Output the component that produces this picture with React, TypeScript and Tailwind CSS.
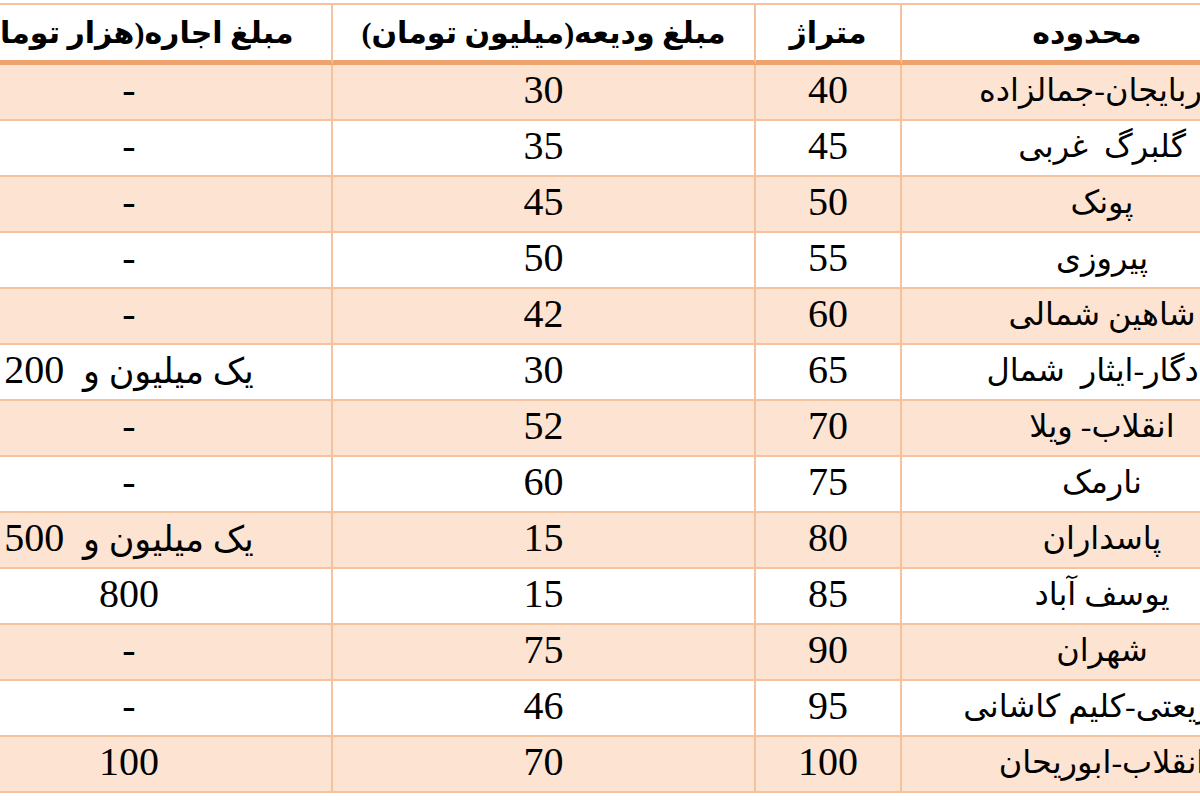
import React from 'react';

const rows = [
  { area: 'آذربایجان-جمالزاده', size: '40', deposit: '30', rent: '-' },
  { area: 'گلبرگ  غربی', size: '45', deposit: '35', rent: '-' },
  { area: 'پونک', size: '50', deposit: '45', rent: '-' },
  { area: 'پیروزی', size: '55', deposit: '50', rent: '-' },
  { area: 'شاهین شمالی', size: '60', deposit: '42', rent: '-' },
  { area: 'یادگار-ایثار  شمال', size: '65', deposit: '30', rent: '1200' },
  { area: 'انقلاب- ویلا', size: '70', deposit: '52', rent: '-' },
  { area: 'نارمک', size: '75', deposit: '60', rent: '-' },
  { area: 'پاسداران', size: '80', deposit: '15', rent: '1500' },
  { area: 'یوسف آباد', size: '85', deposit: '15', rent: '800' },
  { area: 'شهران', size: '90', deposit: '75', rent: '-' },
  { area: 'شریعتی-کلیم کاشانی', size: '95', deposit: '46', rent: '-' },
  { area: 'انقلاب-ابوریحان', size: '100', deposit: '70', rent: '100' },
];

const headers = ['محدوده', 'متراژ', 'مبلغ ودیعه(میلیون تومان)', 'مبلغ اجاره(هزار تومان)'];

const font = { fontFamily: '"Liberation Serif", "DejaVu Sans", serif' };

// rent values above a million are written out in words
function Rent({ value }: { value: string }) {
  if (value === '1200' || value === '1500') {
    return (
      <span>
        <span className="text-[35px]">یک میلیون و </span>
        <span> {value.slice(1)}</span>
      </span>
    );
  }
  return <span>{value}</span>;
}

export default function App() {
  return (
    <div className="w-[1200px] h-[800px] overflow-hidden bg-white" style={font}>
      <div className="pt-[3px] -ml-[73px] w-[1345px]">
        <div
          dir="rtl"
          className="grid grid-cols-[370px_146px_423px_406px] border-t-2 border-[#f4c29c] text-black text-[40px] leading-none"
        >
          {headers.map((h, i) => (
            <div
              key={h}
              className={`h-[60px] flex items-center justify-center bg-white font-bold text-[30px] border-b-[5px] border-b-[#efa36c] whitespace-nowrap ${i > 0 ? 'border-r-2 border-r-[#f4c29c]' : ''}`}
            >
              {h}
            </div>
          ))}
          {rows.map((r, idx) => {
            const bg = idx % 2 === 0 ? 'bg-[#fce3d2]' : 'bg-white';
            const line = 'h-[56px] flex items-center justify-center pb-[4px] border-b-2 border-b-[#f4c29c] whitespace-pre';
            return (
              <React.Fragment key={idx}>
                <div className={`${line} ${bg} text-[32px] pl-[30px]`}>{r.area}</div>
                <div className={`${line} ${bg} border-r-2 border-r-[#f4c29c]`}>{r.size}</div>
                <div className={`${line} ${bg} border-r-2 border-r-[#f4c29c]`}>{r.deposit}</div>
                <div className={`${line} ${bg} border-r-2 border-r-[#f4c29c]`}>
                  <Rent value={r.rent} />
                </div>
              </React.Fragment>
            );
          })}
        </div>
      </div>
    </div>
  );
}
